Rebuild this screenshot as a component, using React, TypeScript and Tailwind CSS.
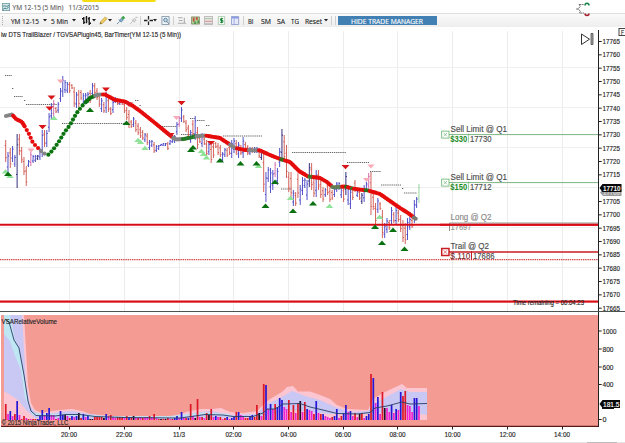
import React from 'react';
import { clsx } from 'clsx';

// one entry per 5 minute bar: high, low, colour
const BARS = `140,162,r 152,172,b 148,168,r 146,162,b 155,167,b 134,188,n 134,155,r 147,163,r 157,175,r 166,186,r
160,167,b 152,166,p 155,163,b 155,162,b 155,160,n 148,160,b 130,157,b 130,147,r 130,147,b 113,132,b
103,120,b 100,118,p 107,113,r 102,113,b 88,102,b 76,97,b 80,93,b 82,93,b 82,93,r 84,89,r
87,107,r 92,108,b 90,107,r 90,100,r 93,107,b 93,103,b 92,103,b 90,103,r 83,97,b 83,95,r
88,100,r 93,107,r 98,112,b 102,113,r 92,113,b 97,112,r 107,115,r 100,113,b 97,103,b 98,105,r
100,105,b 100,105,r 102,113,r 107,120,r 110,128,r 120,128,r 117,127,b 120,132,r 123,135,r 127,138,r
130,140,r 133,142,b 133,145,r 140,150,b 140,147,b 142,153,r 145,152,b 145,150,b 144,146,b 143,146,b
143,146,b 142,150,r 140,145,b 138,143,b 135,143,b 122,135,b 116,127,p 107,122,b 115,123,r 120,132,r
125,137,r 130,143,b 120,137,r 116,140,b 127,149,r 137,143,r 133,147,b 137,145,r 140,157,r 142,155,b
145,163,r 143,158,r 142,148,r 143,155,r 145,157,r 152,162,b 148,157,b 148,157,r 145,155,r 140,158,b
138,153,b 140,155,r 142,158,b 145,155,r 137,158,b 142,152,r 145,155,r 147,155,b 147,153,r 147,153,b
147,153,b 148,158,r 150,160,n 153,192,r 172,202,b 167,182,b 168,193,b 170,190,b 162,177,p 168,185,b
148,167,b 129,160,n 135,162,r 145,178,r 172,192,r 172,198,r 190,206,b 192,206,r 173,198,r 185,205,b
177,195,b 178,188,b 180,200,b 163,187,n 163,190,r 178,197,r 170,197,b 170,190,r 180,198,r 187,202,r
188,197,b 183,195,r 188,202,r 190,200,r 187,197,b 182,192,b 182,190,b 185,198,b 187,202,r 172,195,n
185,205,b 188,209,b 187,200,r 180,192,r 190,197,b 190,200,r 193,204,n 185,202,b 182,192,b 173,190,p
172,215,r 193,210,r 203,225,r 198,213,b 202,210,r 210,238,r 223,238,b 218,233,b 220,230,r 207,225,b
212,223,r 207,225,b 210,222,r 215,232,r 220,242,r 223,244,r 218,240,b 217,230,b 218,228,r 200,223,b
197,208,b 184,203,g`
  .split(/\s+/)
  .map((s) => s.split(','));

const BAR_COLORS: Record<string, string> = {
  r: '#cf5148',
  b: '#3f3ec4',
  n: '#1d1870',
  p: '#cf62a4',
  g: '#8fd09a',
};

const barX = (i: number) => 5.7 + i * 2.283;

// moving average points
const MA: [number, number][] = [
  [6, 116], [12, 114.5], [16, 119], [22, 122], [25, 127], [29, 134], [33, 143], [40, 150], [43, 153], [48, 155],
  [52, 151], [58, 143], [64, 133], [70, 125], [76, 114], [82, 106], [90, 98], [98, 94.5], [105, 94.5], [115, 100],
  [125, 101.5], [133, 106], [140, 111], [155, 123], [172, 137], [176, 139.5], [184, 139], [195, 136.5], [205, 135.5],
  [220, 138], [235, 148], [245, 150], [260, 150.5], [270, 155], [280, 159], [290, 162], [299, 171], [308, 176.5],
  [320, 178], [327, 182], [333, 187.5], [345, 186.5], [355, 189], [368, 190.5], [380, 194], [390, 201], [400, 208],
  [408, 213], [416, 219],
];

// colour of the average up to a given x
const MA_ZONES: [number, string][] = [
  [12, '#858585'], [40, '#e60c0c'], [48, '#858585'], [94, '#0b7410'], [103, '#858585'], [173, '#e60c0c'],
  [181, '#858585'], [195, '#237a28'], [206, '#858585'], [230, '#e60c0c'], [236, '#858585'], [249, '#e60c0c'],
  [259, '#858585'], [280, '#e60c0c'], [284, '#3b6a1c'], [308, '#e60c0c'], [313, '#3b7a2c'], [332, '#e60c0c'],
  [342, '#637d55'], [345, '#e60c0c'], [348, '#2b701c'], [351, '#e60c0c'], [354, '#3b7a2c'], [364, '#e60c0c'],
  [369, '#2b701c'], [414, '#e60c0c'], [500, '#78786e'],
];

const maDots = (() => {
  const dots: { x: number; y: number; c: string }[] = [];
  let left = 0;
  for (let i = 1; i < MA.length; i++) {
    const [x0, y0] = MA[i - 1];
    const [x1, y1] = MA[i];
    const len = Math.hypot(x1 - x0, y1 - y0);
    let d = left;
    for (; d < len; ) {
      const x = x0 + ((x1 - x0) * d) / len;
      const y = y0 + ((y1 - y0) * d) / len;
      const zone = MA_ZONES.find((z) => x < z[0])!;
      dots.push({ x, y, c: zone[1] });
      d += x < 84 && y > 104 && x > 24 ? 4.3 : 2;
    }
    left = d - len;
  }
  return dots;
})();

const UP: [number, number][] = [
  [8, 174], [90, 110], [126.5, 123], [191, 150], [193, 147.5], [220, 160.5], [240.5, 163.5], [256.5, 163.5],
  [265.5, 206], [275, 182], [293, 211], [313, 203.5], [375, 227], [382, 243], [393, 230], [404.5, 249],
];
const UP_LIGHT: [number, number][] = [
  [5.5, 171.5], [10, 176], [54, 118], [138, 140], [140.5, 142], [145, 148], [201.5, 151], [203.5, 154], [206.5, 157.5],
  [258.5, 166], [290.5, 198], [329.5, 206], [379.5, 217],
];
const DOWN: [number, number][] = [
  [51.5, 97.5], [49.5, 108.5], [42.5, 127], [106, 89.5], [129, 104.5], [181.5, 103], [170.5, 135], [211, 143],
  [345.5, 167],
];
const DOWN_LIGHT: [number, number][] = [[60.5, 81.5], [31, 150.5], [176.5, 118], [371, 166.5], [366.5, 180]];

const LEVELS: [number, number, number][] = [
  [5, 12, 75.5], [12, 14, 88.5], [14, 23, 96.5], [24, 25.5, 100.5], [26, 57, 104.5], [62, 128, 123.5],
  [135, 139, 100.5], [139.5, 141, 105.5], [162, 177, 126.5], [181, 197, 134.5], [190, 195, 118.5], [197, 205, 120.5],
  [206, 210, 125.5], [223, 262, 136], [281, 292, 189], [292, 346, 152.5], [347, 369, 162.5], [370, 381, 171.5],
  [381, 401, 185], [402, 404, 188.5], [404, 417, 193],
];

const PRICES = Array.from({ length: 21 }, (_, i) => 17765 - i * 5);
const priceY = (p: number) => 41.5 + (17765 - p) * 2.667;

const TIMES: [number, string][] = [
  [69, '20:00'], [124, '22:00'], [179, '11/3'], [233.5, '02:00'], [288.5, '04:00'], [343, '06:00'], [397.5, '08:00'],
  [452.5, '10:00'], [507.5, '12:00'], [562, '14:00'],
];

// volume histogram, colour followed by height
const VOLUME = `r16 m6 b9 m4 r6 b19 m5 r1 r4 m2 r1 m1 r1 r1 b1 b4 b10 m5 b7 b12 m5 m5 r1 m2 b9 b5 k5 m4 r2 b4
m3 b4 k7 r2 b6 m3 b4 k1 k1 r3 r3 r3 r3 k2 b6 m4 r5 m3 m2 r3 r3 r3 m2 r4 b3 r3 k4 m2 r2 m3
r2 m3 m3 r4 m3 r6 m2 r1 k1 r1 k1 r2 m1 r1 b2 b4 m2 b8 m2 r2 b2 r16 m4 k2 r21 m3 r3 m2 r7 k5
r11 m3 b4 m3 r3 m1 r2 b3 m1 b2 b3 r8 b8 m5 m4 r2 r2 b4 b5 r3 r15 k7 m4 r36 b35 m11 b16 m11 r16 b13
b22 b20 m13 m11 r20 m8 r15 m7 r17 k19 m8 r18 b11 m10 m9 r6 b19 m7 r6 b6 m4 m3 m2 r3 b4 b11 m2 r4 b7 b15
m8 b9 m4 r7 m3 k6 r7 m2 b4 b6 r46 b42 m17 b23 m6 r28 k12 m12 m8 b15 m7 b11 m10 b28 r24 r29 m15 m14 m8 b22
b22 m14`
  .split(/\s+/)
  .map((v) => ({ c: v[0], h: Number(v.slice(1)) }));

const VOL_COLORS: Record<string, string> = { r: '#dd1725', m: '#ee22d4', b: '#2515d6', k: '#220a22' };

const T: React.FC<{
  x: number;
  y: number;
  w: number;
  size?: number;
  fill?: string;
  bold?: boolean;
  children: string;
}> = ({ x, y, w, size = 7.5, fill = '#222', bold, children }) => (
  <text
    x={x}
    y={y}
    textLength={w}
    lengthAdjust="spacingAndGlyphs"
    fontSize={size}
    fill={fill}
    stroke={fill}
    strokeWidth={bold ? 0 : 0.15}
    fontWeight={bold ? 700 : 400}
  >
    {children}
  </text>
);

const Caret = ({ className }: { className?: string }) => (
  <svg viewBox="0 0 4 3" className={clsx('h-[3px] w-1 shrink-0', className)}>
    <path d="M0 0h4L2 2.6z" fill="#222" />
  </svg>
);

const Sep = ({ className }: { className?: string }) => (
  <span className={clsx('h-[9px] w-px shrink-0 bg-[#cfcfcf]', className)} />
);

const Icon = ({ className, children }: { className?: string; children: React.ReactNode }) => (
  <svg viewBox="0 0 10 10" className={clsx('size-[9px] shrink-0', className)} fill="none">
    {children}
  </svg>
);

const TitleBar = () => (
  <header className="relative flex h-[13px] items-center bg-white pl-[2px] leading-none">
    <svg viewBox="0 0 8 8" className="size-2" fill="none">
      <rect x=".4" y=".4" width="7.2" height="7.2" fill="#d6e9ea" stroke="#6b9aa0" strokeWidth=".8" />
      <path d="M1 3.5c2-2 3.5 1.5 6-1.5M1 6.5l2-1.5 1.5 1L7 3.5" stroke="#34767d" strokeWidth=".9" />
    </svg>
    <svg viewBox="0 0 54 13" className="h-[13px] w-[54px] overflow-visible font-['Open_Sans',sans-serif]">
      <T x={2.5} y={9.7} w={51} size={8} fill="#5a5a5a">YM 12-15 (5 Min)</T>
    </svg>
    <svg viewBox="0 0 36 13" className="ml-[4px] h-[13px] w-[36px] overflow-visible font-['Open_Sans',sans-serif]">
      <T x={0.5} y={9.7} w={30.5} size={8} fill="#5a5a5a">11/3/2015</T>
    </svg>
    <span className="absolute top-0 left-[82px] h-[2px] w-[74px] rounded-b bg-[#f5dc12]" />
    <svg viewBox="0 0 16 16" className="absolute top-[1px] left-[575px] z-10 size-4" fill="none">
      <path d="M4 3.500h5M4 3.500l1.500 2-3 2.500 3 2-1 2H9" stroke="#777" strokeWidth="1" strokeDasharray="2 .6" />
      <path d="M1 8h3" stroke="#999" strokeWidth="1.200" />
      <path d="M10 4.500c0-3 4-3 4 0" stroke="#178248" strokeWidth="1.500" />
      <path d="M10 12.500c0 2.500 4 2.500 4 0" stroke="#a51d2c" strokeWidth="1.500" />
    </svg>
  </header>
);

const ToolText = ({ w, className, fill = '#1c1c1c', children }: {
  w: number;
  className?: string;
  fill?: string;
  children: string;
}) => (
  <svg height="10" width={w} className={clsx("shrink-0 overflow-visible font-['Open_Sans',sans-serif]", className)}>
    <T x={0} y={7.8} w={w} size={7.6} fill={fill}>{children}</T>
  </svg>
);

const Toolbar = () => (
  <div className="flex h-[14px] items-center border-t border-[#dedede] bg-linear-to-b from-[#fafafa] to-[#eeeeee]">
    <span className="ml-[2px] h-[9px] border-l border-dotted border-[#aaa]" />
    <ToolText w={28} className="ml-[8px]">YM 12-15</ToolText>
    <Caret className="ml-[4px]" />
    <ToolText w={17} className="ml-[4px]">5 Min</ToolText>
    <Caret className="ml-[4px]" />
    <Icon className="ml-[6px]">
      <path d="M2 1v8M0 3h2M2 7h1.500M5 0v8M4 2h1M5 6h1M8 1v9M6.500 3H8M8 8h2" stroke="#161616" strokeWidth="1.500" />
    </Icon>
    <Caret className="ml-px" />
    <Icon className="ml-[3px]">
      <path d="M1 9l1-3 5-5 2 2-5 5z" fill="#f0cf62" stroke="#b28a35" strokeWidth=".7" />
      <path d="M1 9l.8-2 1.200 1.200z" fill="#6a4c24" />
    </Icon>
    <Caret />
    <Icon className="ml-[4px]">
      <path d="M1 9l3-3M3 4l3 3M4 4.500l2-2 2 2-2 2z" fill="#8cb5d8" stroke="#5b87a8" strokeWidth="1" />
      <path d="M8 0v4M6 2h4" stroke="#249a3b" strokeWidth="1.400" />
    </Icon>
    <Icon className="ml-[4px]">
      <path d="M1 9l3-3M3 4l3 3M4 4.500l2-2 2 2-2 2zM7 1.500h3" fill="#ddd" stroke="#bbb" strokeWidth="1" />
    </Icon>
    <Sep className="ml-[2px]" />
    <Icon className="ml-[3px]">
      <path d="M5 0v3.800M5 6.200V10M0 5h3.800M6.200 5H10" stroke="#222" strokeWidth="1.400" />
    </Icon>
    <Caret />
    <Icon className="ml-[4px]">
      <path d="M1 .5h8v9H1z" fill="#eef4f8" stroke="#8296a8" />
      <circle cx="5" cy="4.500" r="2" fill="#bfdbeb" stroke="#567c96" />
      <path d="M6.500 6l2 2.500" stroke="#526c80" />
    </Icon>
    <Sep className="ml-[3px]" />
    <Icon className="ml-[4px]">
      <path d="M0 2h5M1 5h4M0 8h9M7 2v6" stroke="#aaa" strokeWidth="1.200" />
    </Icon>
    <Icon className="ml-[4px]">
      <path d="M.5 1h9v8h-9z" fill="#a6cf91" stroke="#776f50" strokeWidth=".7" />
      <path d="M3 2v4M6.500 1.500v3" stroke="#d1433f" strokeWidth="1.800" />
      <path d="M8 5v3M4.500 6v3" stroke="#22742d" strokeWidth="1.200" />
    </Icon>
    <Icon className="ml-[4px]">
      <path d="M.5.5h9v9h-9z" fill="#ebe9e8" stroke="#a9a3a3" strokeWidth=".8" />
      <path d="M1 3h8" stroke="#a9c1a8" strokeWidth="1.200" />
      <path d="M1 6h8" stroke="#d8a0a0" strokeWidth="1.500" />
      <path d="M1 8.500h8" stroke="#bbb" />
    </Icon>
    <Icon className="ml-[4px]">
      <path d="M1.500.5h7v9h-7z" fill="#f4faf4" stroke="#9dbda0" strokeWidth=".8" />
      <path d="M6.800 3H4v2h2.500v2H3.500M5 2v6" stroke="#178236" strokeWidth="1.100" />
    </Icon>
    <Icon className="ml-[5px]">
      <path d="M.5.5h8v9h-8z" fill="#e5e9fa" stroke="#8e9bcc" />
      <path d="M1 2h7" stroke="#7c91dd" strokeWidth="1.500" />
      <path d="M3.500 3v6" stroke="#9daae0" />
    </Icon>
    <Sep className="ml-[3px]" />
    <ToolText w={5.5} className="ml-[4px]">BI</ToolText>
    <ToolText w={10} className="ml-[7px]">SM</ToolText>
    <ToolText w={8} className="ml-[6px]">SA</ToolText>
    <ToolText w={8} className="ml-[6px]">TG</ToolText>
    <ToolText w={17} className="ml-[6px]">Reset</ToolText>
    <Caret className="ml-[2px]" />
    <Sep className="ml-[3px]" />
    <Sep className="ml-[3px]" />
    <button className="ml-[2px] flex h-[9px] w-[99px] shrink-0 items-center justify-center bg-[#4280b4]">
      <ToolText w={72} fill="#fff">HIDE TRADE MANAGER</ToolText>
    </button>
  </div>
);

const OrderLabel = ({
  y,
  title,
  titleWidth,
  profit,
  profitWidth,
  price,
  color,
}: {
  y: number;
  title: string;
  titleWidth: number;
  profit: string;
  profitWidth: number;
  price: string;
  color: string;
}) => {
  const isStop = color === '#c81d24';
  return (
    <g>
      <path d={`M449 ${y}H598`} stroke={isStop ? color : '#7db483'} strokeWidth={isStop ? 1.6 : 1} />
      <rect x="441.700" y={y - 3.5} width="7.300" height="7" fill="#fff" stroke={color} strokeWidth={isStop ? 1.5 : 0.8} />
      <path d={`M443.500 ${y - 1.7}l3.500 3.500m0-3.500l-3.500 3.500`} stroke={color} strokeWidth=".6" />
      <T x={450.5} y={y - 3} w={titleWidth} size={8.4} fill="#4c4c4c">{title}</T>
      <T x={450.3} y={y + 7} w={profitWidth} size={8.4} fill={isStop ? '#7c3030' : '#1c8a24'} bold={!isStop}>
        {profit}
      </T>
      <path d={`M${451.5 + profitWidth} ${y - 1}v9`} stroke={color} strokeWidth={isStop ? 1 : 0.6} />
      <T x={453 + profitWidth} y={y + 7} w={21.5} size={8.4} fill="#4c4c4c">{price}</T>
    </g>
  );
};

const PricePlot = () => (
  <svg viewBox="0 27 598 284" className="h-[284px] w-[598px] shrink-0">
    {/* grid */}
    {TIMES.map(([x]) => (
      <path key={x} d={`M${Math.floor(x) + 0.5} 31V311`} stroke="#ececec" />
    ))}
    {[68, 108, 148, 188, 228, 268].map((y) => (
      <path key={y} d={`M0 ${y - 0.5}H598`} stroke="#f0eeee" />
    ))}

    <T x={1} y={37} w={180} size={7.6}>iw DTS TrailBlazer / TGVSAPlugin45, BarTimer(YM 12-15 (5 Min))</T>

    {/* dotted levels */}
    {LEVELS.map(([a, b, y]) => (
      <path key={`${a}-${y}`} d={`M${a} ${y}H${b}`} stroke="#555" strokeWidth=".9" strokeDasharray="1.300 .8" />
    ))}

    {/* price bars */}
    {BARS.map(([hi, lo, c], i) => {
      const x = barX(i);
      const h = Number(hi);
      const l = Number(lo);
      const open = c === 'r' ? h + (l - h) * 0.25 : l - (l - h) * 0.25;
      const close = c === 'r' ? l - (l - h) * 0.2 : h + (l - h) * 0.2;
      return (
        <g key={i} stroke={BAR_COLORS[c]} strokeWidth=".9">
          <path d={`M${x} ${h}V${l}`} />
          <path d={`M${x - 1.1} ${open}h1.1M${x} ${close}h1.1`} />
        </g>
      );
    })}

    {/* support lines */}
    <path d="M0 224.800H598" stroke="#d90d16" strokeWidth="2" />
    <path d="M0 301.600H598" stroke="#f3a9a9" strokeWidth="3" />
    <path d="M0 301.600H598" stroke="#d90d16" strokeWidth="1.600" />
    <path d="M0 259.700H598" stroke="#d34545" strokeWidth="1.200" strokeDasharray="1.400 .8" />

    {maDots.map((d, i) => (
      <circle key={i} cx={d.x} cy={d.y} r="2.100" fill={d.c} />
    ))}

    {UP_LIGHT.map(([x, y]) => (
      <path key={`${x}-${y}`} d={`M${x - 3.8} ${y + 2}L${x} ${y - 2.2}L${x + 3.8} ${y + 2}z`} fill="#8fe399" />
    ))}
    {UP.map(([x, y]) => (
      <path key={`${x}-${y}`} d={`M${x - 4} ${y + 2}L${x} ${y - 2.4}L${x + 4} ${y + 2}z`} fill="#08700f" />
    ))}
    {DOWN_LIGHT.map(([x, y]) => (
      <path key={`${x}-${y}`} d={`M${x - 3.6} ${y - 2}L${x} ${y + 2}L${x + 3.6} ${y - 2}z`} fill="#f7abb8" />
    ))}
    {DOWN.map(([x, y]) => (
      <path key={`${x}-${y}`} d={`M${x - 4} ${y - 2}L${x} ${y + 2.3}L${x + 4} ${y - 2}z`} fill="#d9151a" />
    ))}

    {/* orders */}
    <OrderLabel y={134.6} title="Sell Limit @ Q1" titleWidth={56.5} profit="$330" profitWidth={17} price="17730" color="#62b26b" />
    <OrderLabel y={182.6} title="Sell Limit @ Q1" titleWidth={56.5} profit="$150" profitWidth={17} price="17712" color="#62b26b" />
    <T x={450.5} y={220} w={41} size={8.4} fill="#8a8a8a">Long @ Q2</T>
    <T x={450.5} y={230} w={21} size={8.4} fill="#999">17697</T>
    <path d="M449.500 223H598" stroke="#999" />
    <path d="M449.500 223v8" stroke="#777" strokeWidth=".8" />
    <path d="M440 224.800H598" stroke="#d90d16" strokeWidth="2" />
    <OrderLabel y={252} title="Trail @ Q2" titleWidth={38.5} profit="$.110" profitWidth={20} price="17686" color="#c81d24" />

    <T x={513} y={304.5} w={71} size={7.3}>Time remaining = 00:04:23</T>

    {/* jump to last bar */}
    <path d="M581.500 34v10.500l8-5.300z" fill="#fff" stroke="#333" />
    <path d="M591 33.500h2v11h-2z" fill="#aaa" stroke="#333" strokeWidth=".7" />
  </svg>
);

const PriceAxis = () => (
  <svg viewBox="598 27 27 284" className="h-[284px] w-[27px] shrink-0">
    <path d="M598.500 30V311" stroke="#222" />
    <rect x="619" y="28.500" width="8" height="7" fill="#fff" stroke="#444" />
    <T x={621} y={34.5} w={3} size={6.5}>F</T>
    {PRICES.filter((p) => p !== 17710).map((p) => (
      <g key={p}>
        <path d={`M598.500 ${priceY(p)}h3.200`} stroke="#222" />
        <T x={602.5} y={priceY(p) + 2.6} w={17.5} size={7.4}>{String(p)}</T>
      </g>
    ))}
    {/* last price over the entry price */}
    <path d="M600 192.500l3-3.500h18.500v7H603z" fill="#9a9a9a" />
    <T x={603} y={195.2} w={17} size={6.8} fill="#ddd">17709</T>
    <path d="M599.500 188l3-4h19v8h-19z" fill="#080808" />
    <T x={603} y={190.7} w={17.5} size={7.4} fill="#fff" bold>17710</T>
  </svg>
);

const VolumePlot = () => (
  <svg viewBox="0 311 598 116" className="h-[116px] w-[598px] shrink-0">
    <path d="M0 311.500H598" stroke="#4c5450" />
    <rect x="1" y="315" width="597" height="111" fill="#f49b94" />

    {/* outer bands */}
    <path
      d="M4 315H24L28 385L31 403L35 410L42 413L52 411L60 410L72 409L82 411L90 414L110 416L170 417L190 411L201 409L212 409L221 408L230 412L243 413L257 411L265 403L270 399L282 392L287 387L293 386L298 391.500L310 391.500L320 395L330 399L337 405L347 409L368 410L373 399L383 393L402 384L407 388H427V420H4z"
      fill="#fbc6d2"
    />
    <path
      d="M4 315H22L26 385L30 406L35 412L42 415L60 412L72 411L84 413L110 417L170 418L192 413L212 411L230 415L256 414L267 404L280 398L292 391L305 396L320 400L335 407L350 412L368 411L375 403L388 396L401 389L410 392H427V415L400 411L375 414L330 414L290 410L262 417L180 419L60 419L35 418L26 410L18 400L4 391z"
      fill="#c9c7f3"
    />
    <path d="M4 315H10L15 340L19 348L24 375L28 403L32 413L25 398L21 370L15 356L10 341L4 334z" fill="#bfe6f3" />
    <path d="M32 414L70 415L110 417H170L205 413L230 415" fill="none" stroke="#c3deec" strokeWidth="2" />

    {VOLUME.map((v, i) => (
      <rect key={i} x={barX(i) - 0.8} y={420 - v.h} width="1.700" height={v.h} fill={VOL_COLORS[v.c]} />
    ))}

    {/* average volume */}
    <path
      d="M5 319L9 322L14 340L19 348L24 375L28 401L31 411L36 415.500L55 416L65 414.500L80 414.500L95 416.500L125 417.500L180 418L195 416L205 414.500L223 415L233 416.500L253 416.500L263 413L267 409L275 409L283 404L300 403.500L310 407L323 410L337 413.500L357 414L370 412.500L375 408L387 406L402 402L410 404L427 403.500"
      fill="none"
      stroke="#263d64"
      strokeWidth=".9"
    />
    <T x={1.5} y={324} w={55.5} size={7.5}>VSARelativeVolume</T>
    <T x={1.5} y={425} w={67} size={7.5}>© 2015 NinjaTrader, LLC</T>
    <path d="M1 426.300H598" stroke="#5c1717" strokeWidth="1.200" />
  </svg>
);

const VOL_TICKS: [number, string, number][] = [
  [331, '1000', 14], [349, '800', 11], [367, '600', 11], [384.5, '400', 11], [419.5, '0', 4],
];

const VolumeAxis = () => (
  <svg viewBox="598 311 27 116" className="h-[116px] w-[27px] shrink-0">
    <path d="M598 311.500H625" stroke="#4c5450" />
    <path d="M598.500 312V427" stroke="#222" />
    {VOL_TICKS.map(([y, label, w]) => (
      <g key={label}>
        <path d={`M598.500 ${y}h3.200`} stroke="#222" />
        <T x={602.5} y={y + 2.7} w={w} size={7.4}>{label}</T>
      </g>
    ))}
    <path d="M602 405h12v4h-12z" fill="#111" />
    <path d="M599.500 404l3-4H620v8h-17.500z" fill="#080808" />
    <T x={603} y={406.7} w={16.5} size={7.4} fill="#fff">181.5</T>
  </svg>
);

const TimeAxis = () => (
  <svg viewBox="0 427 625 16" className="h-4 w-[625px]">
    {TIMES.map(([x, label]) => {
      const w = label.length > 4 ? 16 : 12;
      return (
        <g key={label}>
          <path d={`M${Math.floor(x) + 0.5} 427v2.500`} stroke="#222" />
          <T x={x - w / 2} y={436.6} w={w} size={7.4}>{label}</T>
        </g>
      );
    })}
    <path d="M0 442.500H625" stroke="#e6e6e6" />
    <path d="M587 442.500H617" stroke="#bbb" />
  </svg>
);

export default function App() {
  return (
    <div className="flex h-[443px] w-[625px] flex-col overflow-hidden bg-white font-['Liberation_Sans',Arial,sans-serif]">
      <TitleBar />
      <Toolbar />
      <main className="flex flex-col">
        <div className="flex">
          <PricePlot />
          <PriceAxis />
        </div>
        <div className="flex">
          <VolumePlot />
          <VolumeAxis />
        </div>
        <TimeAxis />
      </main>
    </div>
  );
}
